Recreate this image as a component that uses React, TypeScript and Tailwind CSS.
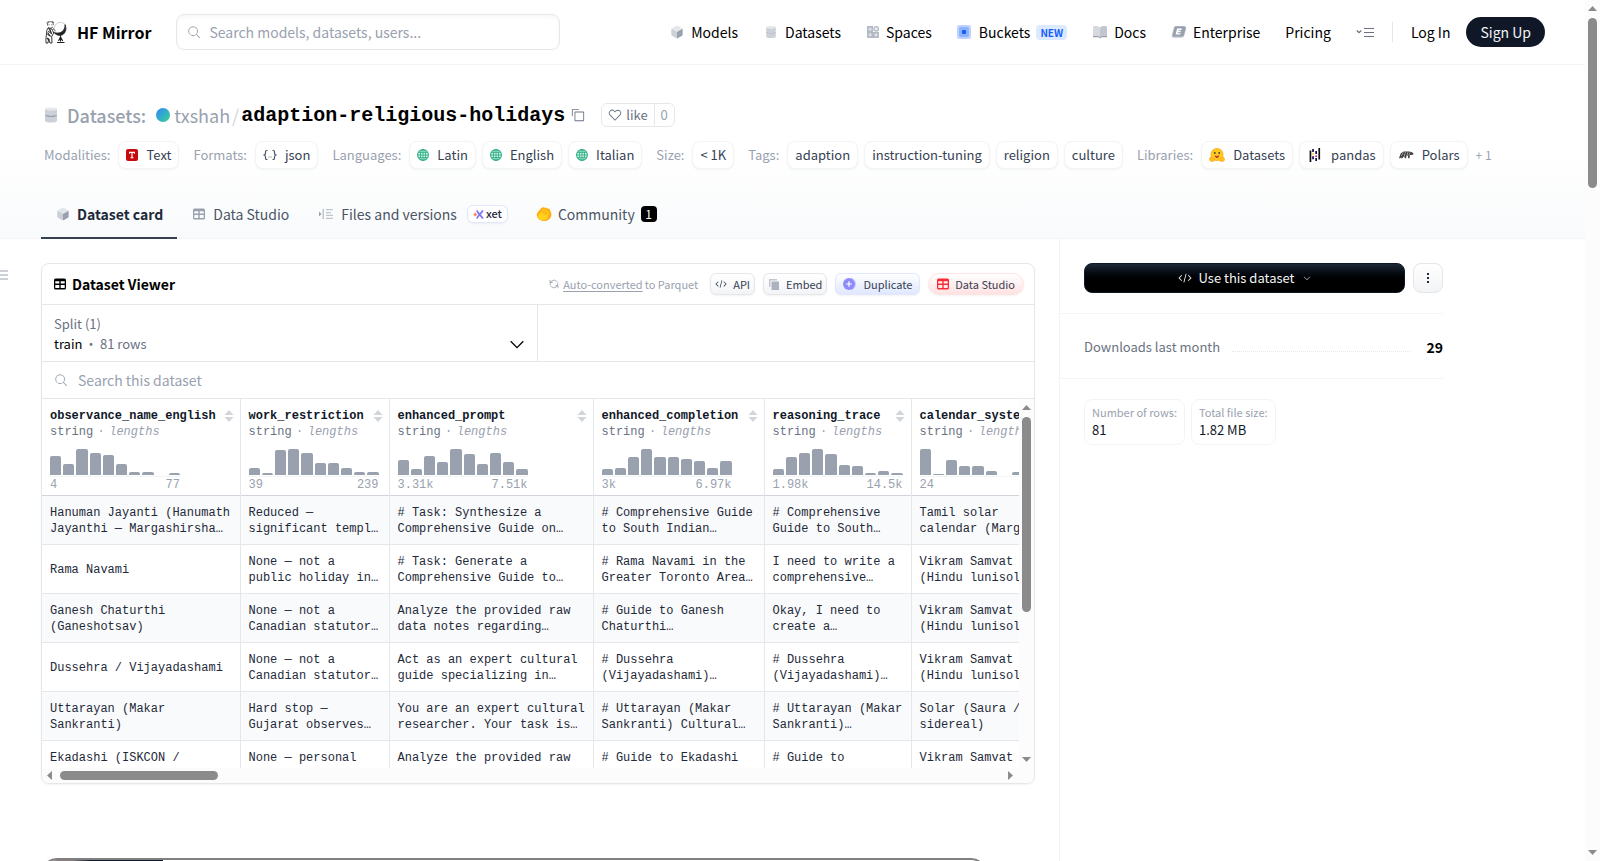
import React from 'react';
import type { ReactNode } from 'react';

interface Column {
  name: string;
  width: string;
  bars: number[];
  min: string;
  max: string;
}

const COLUMNS: Column[] = [
  { name: 'observance_name_english', width: 'w-[198px]', bars: [19, 11, 26, 22, 20, 11, 3, 3, 0, 2], min: '4', max: '77' },
  { name: 'work_restriction', width: 'w-[149px]', bars: [7, 2, 25, 26, 22, 12, 12, 7, 3, 3], min: '39', max: '239' },
  { name: 'enhanced_prompt', width: 'w-[204px]', bars: [15, 6, 19, 13, 26, 21, 11, 22, 13, 6], min: '3.31k', max: '7.51k' },
  { name: 'enhanced_completion', width: 'w-[171px]', bars: [6, 7, 18, 26, 18, 18, 16, 14, 7, 14], min: '3k', max: '6.97k' },
  { name: 'reasoning_trace', width: 'w-[147px]', bars: [6, 18, 22, 26, 21, 10, 9, 2, 4, 2], min: '1.98k', max: '14.5k' },
  { name: 'calendar_system', width: 'w-[160px]', bars: [26, 1, 15, 9, 9, 4, 0, 3, 2, 1], min: '24', max: '197' },
];

const ROWS: string[][] = [
  [
    'Hanuman Jayanti (Hanumath\nJayanthi — Margashirsha…',
    'Reduced —\nsignificant templ…',
    '# Task: Synthesize a\nComprehensive Guide on…',
    '# Comprehensive Guide\nto South Indian…',
    '# Comprehensive\nGuide to South…',
    'Tamil solar\ncalendar (Marga…',
  ],
  [
    'Rama Navami',
    'None — not a\npublic holiday in…',
    '# Task: Generate a\nComprehensive Guide to…',
    '# Rama Navami in the\nGreater Toronto Area…',
    'I need to write a\ncomprehensive…',
    'Vikram Samvat\n(Hindu lunisolar…',
  ],
  [
    'Ganesh Chaturthi\n(Ganeshotsav)',
    'None — not a\nCanadian statutor…',
    'Analyze the provided raw\ndata notes regarding…',
    '# Guide to Ganesh\nChaturthi…',
    'Okay, I need to\ncreate a…',
    'Vikram Samvat\n(Hindu lunisolar…',
  ],
  [
    'Dussehra / Vijayadashami',
    'None — not a\nCanadian statutor…',
    'Act as an expert cultural\nguide specializing in…',
    '# Dussehra\n(Vijayadashami)…',
    '# Dussehra\n(Vijayadashami)…',
    'Vikram Samvat\n(Hindu lunisolar…',
  ],
  [
    'Uttarayan (Makar\nSankranti)',
    'Hard stop —\nGujarat observes…',
    'You are an expert cultural\nresearcher. Your task is…',
    '# Uttarayan (Makar\nSankranti) Cultural…',
    '# Uttarayan (Makar\nSankranti)…',
    'Solar (Saura /\nsidereal)',
  ],
  [
    'Ekadashi (ISKCON /\nVaishnava)',
    'None — personal\nfasting day',
    'Analyze the provided raw\ndata notes regarding…',
    '# Guide to Ekadashi\nObservance…',
    '# Guide to\nEkadashi…',
    'Vikram Samvat\n(Hindu lunisolar…',
  ],
];

const SANS = "font-['Noto_Sans_CJK_SC','Noto_Sans',sans-serif]";
const MONO = "font-['Liberation_Mono',monospace]";

interface IconProps {
  className?: string;
}

function ModelIcon({ className }: IconProps) {
  return (
    <svg className={className} viewBox="0 0 24 24" fill="currentColor" aria-hidden="true">
      <path opacity=".25" d="M20.23 7.24L12 12L3.77 7.24a1.98 1.98 0 0 1 .7-.71L11 2.76c.62-.35 1.38-.35 2 0l6.53 3.77c.29.173.531.418.7.71z" />
      <path opacity=".5" d="M12 12v9.5a2.09 2.09 0 0 1-.91-.21L4.5 17.48a2.003 2.003 0 0 1-1-1.73v-7.5a2.06 2.06 0 0 1 .27-1.01L12 12z" />
      <path d="M20.5 8.25v7.5a2.003 2.003 0 0 1-1 1.73l-6.62 3.82c-.275.13-.576.198-.88.2V12l8.23-4.76c.175.308.268.656.27 1.01z" />
    </svg>
  );
}

function DatabaseIcon({ className }: IconProps) {
  return (
    <svg className={className} viewBox="0 0 25 25" fill="currentColor" aria-hidden="true">
      <ellipse cx="12.5" cy="5" rx="7.5" ry="2" opacity=".25" />
      <path opacity=".5" d="M12.5 15C16.64 15 20 14.1 20 13V20C20 21.1 16.64 22 12.5 22C8.36 22 5 21.1 5 20V13C5 14.1 8.36 15 12.5 15Z" />
      <path opacity=".5" d="M12.5 7C16.64 7 20 6.1 20 5V11.5C20 12.6 16.64 13.5 12.5 13.5C8.36 13.5 5 12.6 5 11.5V5C5 6.1 8.36 7 12.5 7Z" />
      <path d="M5.24 12C5.08 12.16 5 12.83 5 13C5 14.1 8.36 15 12.5 15C16.64 15 20 14.1 20 13C20 12.83 19.92 12.16 19.76 12C18.93 12.86 16 13.5 12.5 13.5C9 13.5 6.07 12.86 5.24 12Z" />
    </svg>
  );
}

function SpacesIcon({ className }: IconProps) {
  return (
    <svg className={className} viewBox="0 0 14 14" fill="currentColor" aria-hidden="true">
      <path d="M1.500 1H7v12H2a1 1 0 0 1-1-1V1.500A.5.500 0 0 1 1.500 1Z" opacity=".75" />
      <path d="M7 7h5.500a.5.500 0 0 1 .5.500V12a1 1 0 0 1-1 1H7Z" opacity=".75" />
      <circle cx="10.200" cy="3.800" r="2.900" opacity=".75" />
      <path d="M2.700 2.700h2.800v2.800H2.700ZM2.700 8.500h2.800v2.800H2.700ZM8.600 8.500h2.800v2.800H8.600Z" fill="#dfe3e8" />
      <circle cx="10.200" cy="3.800" r="1.500" fill="#eef0f3" />
    </svg>
  );
}

function BucketIcon({ className }: IconProps) {
  return (
    <svg className={className} viewBox="0 0 14 14" aria-hidden="true">
      <rect width="14" height="14" rx="2.500" fill="#bfd3ff" />
      <rect x="2" y="2" width="10" height="10" rx="2" fill="#8db2ff" />
      <rect x="5" y="5" width="4" height="4" rx="1" fill="#155dfc" />
    </svg>
  );
}

function DocsIcon({ className }: IconProps) {
  return (
    <svg className={className} viewBox="0 0 16 14" fill="currentColor" aria-hidden="true">
      <path opacity=".4" d="M1 2.500C1 1.700 1.600 1 2.500 1H5c1.500 0 2.700.8 3 2v9.500c-.6-.9-1.600-1.300-2.700-1.300H1Z" />
      <path opacity=".6" d="M15 2.500c0-.8-.6-1.500-1.500-1.500H11C9.500 1 8.300 1.800 8 3v9.500c.6-.9 1.600-1.300 2.700-1.300H15Z" />
      <path d="M1 11h4.300c1.200 0 2.200.5 2.700 1.500.5-1 1.500-1.500 2.700-1.500H15v1.200h-4.300c-1.100 0-2 .4-2.700 1.200-.7-.8-1.600-1.200-2.700-1.200H1Z" />
    </svg>
  );
}

function EnterpriseIcon({ className }: IconProps) {
  return (
    <svg className={className} viewBox="0 0 18 14" aria-hidden="true">
      <path fill="#c3c9d3" d="M5.300.5H14.500c2.300 0 3 1.300 2.500 3l-1.900 7c-.5 1.900-1.700 3-3.600 3H3C1 13.500.4 12.300.9 10.500l1.800-7C3.200 1.600 3.500.5 5.300.5Z" />
      <path fill="#99a1af" d="M5.500.5H14.500c1.800 0 2.300 1.100 1.900 2.600l-1.700 6.600c-.4 1.600-1.300 2.500-3 2.500H3.800c-1.800 0-2.300-1-1.900-2.500l1.800-6.700C4.100 1.500 4 .5 5.500.5Z" />
      <path fill="#fff" d="M6.900 3.200h5.200l-.4 1.500H8.400l-.3 1h3l-.4 1.500h-3l-.3 1.100h3.400l-.4 1.500H5.100Z" />
    </svg>
  );
}

function SearchIcon({ className }: IconProps) {
  return (
    <svg className={className} viewBox="0 0 32 32" fill="currentColor" aria-hidden="true">
      <path d="M30 28.590L22.450 21A11 11 0 1 0 21 22.450L28.590 30zM5 14a9 9 0 1 1 9 9a9 9 0 0 1-9-9z" />
    </svg>
  );
}

function HeartIcon({ className }: IconProps) {
  return (
    <svg className={className} viewBox="0 0 32 32" fill="currentColor" aria-hidden="true">
      <path d="M22.45,6a5.47,5.47,0,0,1,3.91,1.64,5.7,5.7,0,0,1,0,8L16,26.13,5.64,15.64a5.7,5.7,0,0,1,0-8,5.48,5.48,0,0,1,7.82,0L16,10.24l2.53-2.58A5.44,5.44,0,0,1,22.45,6m0-2a7.47,7.47,0,0,0-5.34,2.24L16,7.36,14.89,6.24a7.49,7.49,0,0,0-10.68,0,7.72,7.72,0,0,0,0,10.82L16,29,27.79,17.06a7.72,7.72,0,0,0,0-10.82A7.49,7.49,0,0,0,22.45,4Z" />
    </svg>
  );
}

function CopyIcon({ className }: IconProps) {
  return (
    <svg className={className} viewBox="0 0 32 32" fill="currentColor" aria-hidden="true">
      <path d="M28,10V28H10V10H28m0-2H10a2,2,0,0,0-2,2V28a2,2,0,0,0,2,2H28a2,2,0,0,0,2-2V10a2,2,0,0,0-2-2Z" />
      <path d="M4,18H2V4A2,2,0,0,1,4,2H18V4H4Z" />
    </svg>
  );
}

function CodeIcon({ className }: IconProps) {
  return (
    <svg className={className} viewBox="0 0 32 32" fill="currentColor" aria-hidden="true">
      <path d="M31 16l-7 7l-1.410-1.410L28.170 16l-5.580-5.590L24 9l7 7zM1 16l7-7l1.410 1.410L3.830 16l5.580 5.590L8 23l-7-7zM12.419 25.484L17.639 6l1.932.518L14.350 26z" />
    </svg>
  );
}

function ChevronIcon({ className }: IconProps) {
  return (
    <svg className={className} viewBox="0 0 32 32" fill="currentColor" aria-hidden="true">
      <path d="M16 25L2.500 11.500l1.800-1.800L16 21.400l11.700-11.700 1.800 1.800z" />
    </svg>
  );
}

function TableIcon({ className }: IconProps) {
  return (
    <svg className={className} viewBox="0 0 12 12" fill="currentColor" aria-hidden="true">
      <path fillRule="evenodd" d="M1.500.5h9A1.500 1.500 0 0 1 12 2v8a1.500 1.500 0 0 1-1.500 1.500h-9A1.500 1.500 0 0 1 0 10V2A1.500 1.500 0 0 1 1.500.5ZM1.300 3.300v2.300h4V3.300Zm5.400 0v2.300h4V3.300ZM1.300 6.900v3.200h4V6.900Zm5.400 0v3.200h4V6.900Z" />
    </svg>
  );
}

function FilesIcon({ className }: IconProps) {
  return (
    <svg className={className} viewBox="0 0 14 12" fill="currentColor" aria-hidden="true">
      <path d="M0 3.500 2.500 6 0 8.500Z" />
      <path opacity=".6" d="M3.500 1H5v10H3.500ZM7 1h7v1.300H7ZM7 4h5v1.300H7ZM7 6.800h7v1.300H7ZM7 9.700h7V11H7Z" />
    </svg>
  );
}

function GlobeIcon() {
  return (
    <svg className="mr-2 size-3" viewBox="0 0 12 12" fill="none" stroke="#2fae86" aria-hidden="true">
      <circle cx="6" cy="6" r="5.400" fill="#d8f5ea" strokeWidth="1.100" />
      <path d="M6 .6v10.800M.6 6h10.800M1.400 3.400h9.200M1.400 8.600h9.200" strokeWidth=".9" />
      <ellipse cx="6" cy="6" rx="2.600" ry="5.400" strokeWidth=".9" />
    </svg>
  );
}

function TextIcon() {
  return (
    <svg className="mr-2 size-3" viewBox="0 0 12 12" aria-hidden="true">
      <rect width="12" height="12" rx="2" fill="#c70a0c" />
      <path d="M3 2.800h6v2H8V4H6.600v4.200h.9v1h-3v-1h.9V4H4v.8H3Z" fill="#fff" />
    </svg>
  );
}

function JsonIcon() {
  return (
    <svg className="mr-2 h-3 w-3.5" viewBox="0 0 14 12" fill="none" stroke="#4a5565" strokeWidth="1.200" aria-hidden="true">
      <path d="M4.500 1.500h-.7c-.9 0-1.300.5-1.300 1.300V4c0 1-.4 1.700-1.300 2 .9.300 1.300 1 1.300 2v1.200c0 .8.400 1.300 1.300 1.300h.7M9.500 1.500h.7c.9 0 1.300.5 1.300 1.300V4c0 1 .4 1.700 1.300 2-.9.300-1.300 1-1.300 2v1.200c0 .8-.4 1.300-1.300 1.300h-.7" />
      <path d="M5.600 8h.8M7.600 8h.8" />
    </svg>
  );
}

function HuggingIcon() {
  return (
    <svg className="mr-2 h-3.5 w-4" viewBox="0 0 16 14" aria-hidden="true">
      <circle cx="8" cy="6.500" r="6" fill="#ffcb1f" stroke="#ff9d0b" strokeWidth=".8" />
      <path d="M1.500 9.200c1-.3 1.700.3 2.500 1 1.500.2 2 1.400 1.500 2.400-.5 1-3.200 1.100-4.200.4C.2 12.200.3 9.700 1.500 9.200ZM14.500 9.200c-1-.3-1.700.3-2.500 1-1.500.2-2 1.400-1.500 2.400.5 1 3.200 1.100 4.200.4 1.100-.8 1-3.300-.2-3.800Z" fill="#ffc21f" stroke="#ff9d0b" strokeWidth=".6" />
      <circle cx="5.800" cy="5" r=".9" fill="#3a3b45" />
      <circle cx="10.200" cy="5" r=".9" fill="#3a3b45" />
      <path d="M5.800 7.300c1.200 1 3.200 1 4.400 0-.1 1.700-1 2.600-2.200 2.600S5.900 9 5.800 7.300Z" fill="#c8323c" />
    </svg>
  );
}

function PandasIcon() {
  return (
    <svg className="mr-2.5 ml-0.5 h-3.5 w-3" viewBox="0 0 12 14" aria-hidden="true">
      <path fill="#130754" d="M3.200 1h1.700v3H3.200ZM3.200 8.200h1.700v3H3.200ZM6.300 2.900H8v3H6.300ZM6.300 10H8v3H6.300Z" />
      <path fill="#111" d="M.6 2.500h1.700V14H.6ZM9.400 0h1.700v11.500H9.400Z" />
      <path fill="#ffca00" d="M3.200 4.900h1.700v1.500H3.200Z" />
      <path fill="#e70488" d="M6.300 7.400H8v1.500H6.300Z" />
    </svg>
  );
}

function PolarsIcon() {
  return (
    <svg className="mr-2 h-3.5 w-4" viewBox="0 0 16 14" aria-hidden="true">
      <path fill="#3c3c3c" d="M1 10.300 2.300 6.500C3 4.800 4.400 3.600 6.400 3.500l4.100.1c1.400 0 2.500.2 3.300.6l1.600 1-.2 1.300-1.900.4-1.500.1-.3 3.300h-1.300l-.4-2.700-1.400.5-.3 2.200H6.700l-.2-2.100-.9.200-1.100 1.900H3L3.800 8.400 2.300 10.300Z" />
      <path stroke="#fff" strokeWidth=".5" d="m5.200 4-1.700 4M7.500 4 6.200 8M10 4 8.700 8M12 4.500l-1.200 3" />
    </svg>
  );
}

function ClapIcon({ className }: IconProps) {
  return (
    <svg className={className} viewBox="0 0 17 16" aria-hidden="true">
      <path fill="#ffab14" d="M.9 9.500C.6 7.800 1.500 6.900 2.400 5.700 3.600 4 5 2.300 6.600 1.200 7.600.5 8.700.6 9 1.500c1-.6 2-.4 2.300.5 1.100-.5 2-.1 2.100.8 1.200-.1 1.800.6 1.500 1.700 1 .6 1.600 2.500 1.400 4.600-.2 3.200-2.800 5.700-6.100 6.300-2.900.5-5.200-.2-7.300-2.100C1.800 12.300 1.100 11 .9 9.500Z" />
      <path fill="#ffd21e" d="M2 11.500C1.600 9.500 3 8.600 4 7.300L8 2.800c.8-.9 1.900-.3 1.500.7 1-.8 2-.2 1.500.9 1-.6 1.900.1 1.400 1.200.9-.2 1.800.3 1.300 1.400-1 1.700-1 3.100-1.200 4.800-.3 2-2.700 3.100-4.900 2.900-2.700-.1-5.100-1.300-5.600-3.200Z" />
      <path fill="none" stroke="#f08c00" strokeWidth=".7" d="M9.500 3.500 6.300 7.200M11 4.600 7.800 8.300M12.300 5.800 9.400 9.200" />
    </svg>
  );
}

function XetIcon() {
  return (
    <svg className="size-[11px]" viewBox="0 0 12 12" fill="none" aria-hidden="true">
      <path fill="#ff7d52" d="M2.500 3.800 4.400 6 2.500 8.200.4 6Z" />
      <path stroke="#7c75f5" strokeWidth="1.900" d="M4.300 1.500C4.700 4.500 9.700 7.500 10.700 10.500M10.700 1.500C9.700 4.500 4.700 7.500 4.300 10.500" />
    </svg>
  );
}

function MirrorLogo() {
  return (
    <svg className="h-6 w-[22px]" viewBox="0 0 22 24" fill="none" stroke="#222" aria-hidden="true">
      <path d="M2.500 5.500c-.5-2.500 1-4 3-3.800 2 0 3.200 1.500 2.600 3.600M1.500 3l2-1.500M7 1.200l2 1.600M3 7.200c1.500 1.300 4 1.200 5-.4M3.500 4.800h1M6.300 4.800h.8" strokeWidth=".7" />
      <path d="M2.500 8.500C1.200 11 1.800 14 1 17.500c-.3 2 .1 3.500 0 5.500h2l.7-4.500L5 23h2l-.3-6.500 2-3.500-1.700-4ZM3 11l4 3M2.300 14.500l4 2M8 8.500l2.500 2.300" strokeWidth=".9" />
      <path d="M2.600 12.500 5 16M4.500 9l2 4.500M2 18l2 2" strokeWidth="1.200" />
      <path d="M20 4.500c1.800 3.800.8 8.500-2.500 10.200-3 1.500-6.600.3-8.500-2.200 3 1 6 .6 8-.8 2.200-1.600 3.200-4.200 3-7.200Z" fill="#222" strokeWidth=".8" />
      <path d="M20 4.500c-2.500-3-7.300-2.600-9.500.4-1.400 2-1.700 4.500-.8 6.800" stroke="#999" strokeWidth=".5" />
      <path d="M15.500 15.300v6.200M12 22.500h7.500M13.500 21l2-4 2.200 4" strokeWidth="1.100" />
    </svg>
  );
}

function NavLink({ icon, children }: { icon?: ReactNode; children: ReactNode }) {
  return (
    <a href="#" className="flex items-center whitespace-nowrap text-black">
      {icon}
      {children}
    </a>
  );
}

function Tag({ icon, children }: { icon?: ReactNode; children: ReactNode }) {
  return (
    <a
      href="#"
      className="flex h-7 items-center whitespace-nowrap rounded-lg border border-gray-100 bg-white px-[7px] text-[13px] text-gray-700 shadow-xs"
    >
      {icon}
      {children}
    </a>
  );
}

function TagGroup({ label, children }: { label: string; children: ReactNode }) {
  return (
    <div className="flex items-center gap-1.5">
      <span className="mr-0.5 whitespace-nowrap text-[13px] text-gray-400">{label}</span>
      {children}
    </div>
  );
}

function SiteHeader() {
  return (
    <header className="flex h-[65px] shrink-0 items-center border-b border-gray-100 pr-10 pl-[41px] text-sm">
      <a href="#" className="mr-[25px] ml-1 flex items-center gap-2.5 text-base font-bold whitespace-nowrap text-black">
        <MirrorLogo />
        HF Mirror
      </a>
      <label className="flex h-9 w-96 items-center rounded-lg border border-gray-200 px-2.5 shadow-[inset_0_2px_4px_rgba(0,0,0,0.04)]">
        <SearchIcon className="mr-2 size-3.5 text-gray-400" />
        <input
          type="text"
          aria-label="Search"
          placeholder="Search models, datasets, users..."
          className="min-w-0 flex-1 outline-none placeholder:text-gray-400"
        />
      </label>
      <nav className="ml-auto flex items-center gap-[25px]">
        <NavLink icon={<ModelIcon className="mr-1.5 size-4 text-gray-400" />}>Models</NavLink>
        <NavLink icon={<DatabaseIcon className="mr-1.5 size-4 text-gray-400" />}>Datasets</NavLink>
        <NavLink icon={<SpacesIcon className="mr-1.5 size-3.5 text-gray-400" />}>Spaces</NavLink>
        <NavLink icon={<BucketIcon className="mr-2 size-3.5" />}>
          Buckets
          <span className="ml-1.5 rounded-sm bg-blue-100 px-1 text-[10px] leading-[15px] font-bold text-blue-600">NEW</span>
        </NavLink>
        <NavLink icon={<DocsIcon className="mr-1.5 h-3.5 w-4 text-gray-400" />}>Docs</NavLink>
        <NavLink icon={<EnterpriseIcon className="mr-1.5 h-3.5 w-4" />}>Enterprise</NavLink>
        <NavLink>Pricing</NavLink>
        <button type="button" aria-label="More" className="text-gray-500">
          <svg className="h-3 w-[18px]" viewBox="0 0 18 12" fill="none" stroke="currentColor">
            <path d="m.8 4.500 2.200 2.200 2.200-2.200" strokeWidth="1.200" />
            <path d="M8 2.500h10M8 6.500h10M8 10.500h10" />
          </svg>
        </button>
      </nav>
      <span className="mx-[18px] h-5 w-px bg-gray-200" />
      <a href="#" className="mr-4 whitespace-nowrap text-black">Log In</a>
      <a href="#" className="flex h-[30px] items-center rounded-full bg-gray-900 px-3.5 whitespace-nowrap text-gray-100">
        Sign Up
      </a>
    </header>
  );
}

function DatasetHeader() {
  return (
    <section className="shrink-0 border-b border-gray-100 bg-linear-to-t from-gray-50 to-white to-50% pt-[38px] pr-10 pl-[41px]">
      <div className="flex h-6 items-center pl-1 text-lg leading-6">
        <DatabaseIcon className="-mx-1 mr-1.5 size-5 text-gray-400" />
        <span className="mr-2.5 font-medium text-gray-400">Datasets:</span>
        <span className="mr-1 size-3.5 rounded-full bg-linear-to-br from-[#3b82f6] to-[#3fd08c]" />
        <a href="#" className="text-gray-400">txshah</a>
        <span className="mx-0.5 text-gray-300">/</span>
        <h1 className={`${MONO} pt-0.5 text-xl leading-6 font-bold whitespace-nowrap text-black`}>adaption-religious-holidays</h1>
        <button type="button" aria-label="Copy dataset name" className="mx-1.5 text-gray-500">
          <CopyIcon className="size-3.5" />
        </button>
        <div className="ml-2.5 flex h-6 items-center rounded-md border border-gray-200 bg-white text-[13px]">
          <button type="button" className="flex h-full items-center border-r border-gray-200 px-1.5 text-gray-500">
            <HeartIcon className="mr-1 size-3.5" />
            like
          </button>
          <button type="button" aria-label="See users who liked" className="px-1.5 text-gray-400">0</button>
        </div>
      </div>

      <div className="mt-3.5 flex h-7 items-center gap-3.5 pl-[3px]">
        <TagGroup label="Modalities:">
          <Tag icon={<TextIcon />}>Text</Tag>
        </TagGroup>
        <TagGroup label="Formats:">
          <Tag icon={<JsonIcon />}>json</Tag>
        </TagGroup>
        <TagGroup label="Languages:">
          <Tag icon={<GlobeIcon />}>Latin</Tag>
          <Tag icon={<GlobeIcon />}>English</Tag>
          <Tag icon={<GlobeIcon />}>Italian</Tag>
        </TagGroup>
        <TagGroup label="Size:">
          <Tag>&lt; 1K</Tag>
        </TagGroup>
        <TagGroup label="Tags:">
          <Tag>adaption</Tag>
          <Tag>instruction-tuning</Tag>
          <Tag>religion</Tag>
          <Tag>culture</Tag>
        </TagGroup>
        <TagGroup label="Libraries:">
          <Tag icon={<HuggingIcon />}>Datasets</Tag>
          <Tag icon={<PandasIcon />}>pandas</Tag>
          <Tag icon={<PolarsIcon />}>Polars</Tag>
          <button type="button" className="ml-0.5 text-xs whitespace-nowrap text-gray-400">+ 1</button>
        </TagGroup>
      </div>

      <nav className="-mb-px mt-[22px] flex h-12 text-sm text-gray-600">
        <a href="#" className="flex items-center border-b-2 border-gray-700 px-3.5 font-semibold whitespace-nowrap text-gray-800">
          <ModelIcon className="mr-1.5 size-4 text-gray-400" />
          Dataset card
        </a>
        <a href="#" className="flex items-center border-b-2 border-transparent px-4 whitespace-nowrap">
          <TableIcon className="mr-2 size-3 text-gray-400" />
          Data Studio
        </a>
        <a href="#" className="flex items-center border-b-2 border-transparent px-3.5 whitespace-nowrap">
          <FilesIcon className="mr-2 h-3 w-3.5 text-gray-400" />
          Files and versions
          <span className="ml-2.5 flex h-[18px] items-center gap-0.5 rounded-md border border-indigo-100 bg-white px-[5px] text-[11px] font-medium text-gray-800 shadow-xs">
            <XetIcon />
            xet
          </span>
        </a>
        <a href="#" className="flex items-center border-b-2 border-transparent px-3.5 whitespace-nowrap">
          <ClapIcon className="mr-1.5 size-4" />
          Community
          <span className="ml-1.5 flex size-4 items-center justify-center rounded-sm bg-black text-xs text-white">1</span>
        </a>
      </nav>
    </section>
  );
}

function ViewerToolbar() {
  return (
    <div className="flex h-[41px] items-center border-b border-gray-200 pr-2.5 pl-3 text-[11px]">
      <TableIcon className="mr-1.5 size-3 text-black" />
      <h2 className="text-sm font-semibold whitespace-nowrap text-black">Dataset Viewer</h2>
      <div className="ml-auto flex items-center gap-2 whitespace-nowrap text-gray-700">
        <span className="mr-1 flex items-center text-gray-400">
          <svg className="mr-1 size-2.5" viewBox="0 0 12 12" fill="none" stroke="currentColor" aria-hidden="true">
            <path d="M1.500 7.500A4.700 4.700 0 0 1 9 2.500L10.500 4M10.500 4.800A4.700 4.700 0 0 1 3 9.500L1.500 8" />
            <path d="M4.500 4.200H1.200V1M7.500 8h3.300v3" />
          </svg>
          <a href="#" className="underline underline-offset-2">Auto-converted</a>
          <span className="ml-0.5">to Parquet</span>
        </span>
        <button type="button" className="flex h-[22px] items-center rounded-md border border-gray-200 bg-linear-to-b from-white to-gray-100 px-1 shadow-xs">
          <CodeIcon className="mr-1.5 size-3" />
          API
        </button>
        <button type="button" className="flex h-[22px] items-center rounded-md border border-gray-200 bg-linear-to-b from-white to-gray-100 px-1 shadow-xs">
          <svg className="mr-1.5 size-3 text-gray-400" viewBox="0 0 12 12" fill="currentColor" aria-hidden="true">
            <path opacity=".6" d="M1 1h8v1.500H2.500V9H1Z" />
            <path opacity=".8" d="M3.500 3.500H11V12H3.500Z" />
          </svg>
          Embed
        </button>
        <button type="button" className="flex h-[22px] items-center rounded-md border border-indigo-100 bg-linear-to-b from-white to-indigo-100 px-[7px] shadow-xs">
          <svg className="mr-1.5 size-3.5" viewBox="0 0 14 14" aria-hidden="true">
            <path d="M8 1.200a6 6 0 0 1 0 11.600" fill="none" stroke="#a5a2ff" strokeDasharray="1.500 1" />
            <circle cx="6" cy="7" r="6" fill="#8e8cf8" />
            <path d="M6 4.200v5.600M3.200 7h5.600" stroke="#fff" strokeWidth="1.200" />
          </svg>
          Duplicate
        </button>
        <button type="button" className="flex h-[22px] items-center rounded-full border border-red-100 bg-linear-to-b from-white to-red-100 px-2 shadow-xs">
          <TableIcon className="mr-1.5 size-3 text-[#fb2c36]" />
          Data Studio
        </button>
      </div>
    </div>
  );
}

function SortIcon() {
  return (
    <svg className="h-3 w-2.5 shrink-0 text-gray-300" viewBox="0 0 10 12" fill="currentColor" aria-hidden="true">
      <path d="M5 0l4.500 5h-9ZM5 12L.5 7h9Z" />
    </svg>
  );
}

function Histogram({ bars, min, max }: { bars: number[]; min: string; max: string }) {
  return (
    <div className="mt-[9px] w-[130px] font-normal text-gray-400">
      <div className="flex h-[26px] items-end gap-0.5">
        {bars.map((bar, index) => (
          <span key={index} className="flex-1 rounded-t-xs bg-gray-400" style={{ height: bar }} />
        ))}
      </div>
      <div className="mt-px flex h-4 justify-between border-t border-gray-100 leading-4">
        <span>{min}</span>
        <span>{max}</span>
      </div>
    </div>
  );
}

function DataTable() {
  return (
    <table className={`${MONO} w-[1029px] table-fixed border-collapse text-left text-xs leading-4`}>
      <thead>
        <tr className="h-24 border-b border-gray-300">
          {COLUMNS.map((column) => (
            <th key={column.name} scope="col" className={`${column.width} border-r border-gray-200 pt-[9px] pr-1.5 pl-2 align-top`}>
              <div className="flex items-center justify-between text-gray-900">
                {column.name}
                <SortIcon />
              </div>
              <div className="flex whitespace-nowrap font-normal text-gray-500">
                string
                <span className="w-4 text-center text-gray-400">·</span>
                <span className="text-gray-400 italic">lengths</span>
              </div>
              <Histogram bars={column.bars} min={column.min} max={column.max} />
            </th>
          ))}
        </tr>
      </thead>
      <tbody>
        {ROWS.map((row, rowIndex) => (
          <tr key={rowIndex} className="h-[49px] border-b border-gray-200 odd:bg-gray-50">
            {row.map((cell, index) => (
              <td key={index} className="border-r border-gray-200 px-2 pt-0.5 whitespace-pre text-gray-800">
                {cell}
              </td>
            ))}
          </tr>
        ))}
      </tbody>
    </table>
  );
}

function VerticalBar({ thumb }: { thumb: string }) {
  return (
    <div className="flex w-[15px] shrink-0 flex-col items-center bg-[#fcfcfc] py-1.5 text-[#8b8b8b]" aria-hidden="true">
      <svg className="h-[5px] w-[9px] shrink-0" viewBox="0 0 9 5" fill="currentColor"><path d="M4.500 0 9 5H0Z" /></svg>
      <div className={`mt-[7px] w-[9px] rounded-full bg-[#8b8b8b] ${thumb}`} />
      <svg className="mt-auto h-[5px] w-[9px] shrink-0" viewBox="0 0 9 5" fill="currentColor"><path d="M0 0h9L4.500 5Z" /></svg>
    </div>
  );
}

function HorizontalBar() {
  return (
    <div className="flex h-[15px] items-center bg-[#fcfcfc] pr-[21px] pl-[5px] text-[#8b8b8b]" aria-hidden="true">
      <svg className="h-[9px] w-[5px]" viewBox="0 0 5 9" fill="currentColor"><path d="M5 0v9L0 4.500Z" /></svg>
      <div className="ml-2 h-[9px] w-[158px] rounded-full bg-[#8b8b8b]" />
      <svg className="ml-auto h-[9px] w-[5px]" viewBox="0 0 5 9" fill="currentColor"><path d="M0 0v9l5-4.500Z" /></svg>
    </div>
  );
}

function DatasetViewer() {
  return (
    <div className="overflow-hidden rounded-lg border border-gray-200 shadow-xs">
      <ViewerToolbar />
      <div className="grid grid-cols-2 border-b border-gray-200 text-[13px] leading-5">
        <div className="flex h-14 items-end border-r border-gray-200 px-3 pb-[7px]">
          <div className="flex-1">
            <label htmlFor="split" className="block text-gray-500">Split (1)</label>
            <div className="flex text-gray-500">
              <select id="split" className="w-7 appearance-none text-black outline-none">
                <option>train</option>
              </select>
              <span className="w-[18px] text-center">·</span>
              <span>81 rows</span>
            </div>
          </div>
          <ChevronIcon className="mb-0.5 size-4 text-black" />
        </div>
      </div>
      <label className="flex h-[37px] items-center border-b border-gray-200 px-3 text-sm">
        <SearchIcon className="mr-2.5 size-3.5 text-gray-400" />
        <input
          type="text"
          aria-label="Search this dataset"
          placeholder="Search this dataset"
          className="min-w-0 flex-1 outline-none placeholder:text-gray-400"
        />
      </label>
      <div className="flex h-[369px]">
        <div className="min-w-0 flex-1 overflow-hidden">
          <DataTable />
        </div>
        <VerticalBar thumb="h-[195px]" />
      </div>
      <HorizontalBar />
    </div>
  );
}

function Stat({ label, value }: { label: string; value: string }) {
  return (
    <div className="rounded-lg border border-gray-100 px-[7px] py-1">
      <div className="text-[11px] leading-4 text-gray-400">{label}</div>
      <div className="text-[13px] leading-5 text-gray-900">{value}</div>
    </div>
  );
}

function Sidebar() {
  return (
    <aside className="border-l border-gray-100 pt-6">
      <div className="flex gap-2 pb-5 pl-6">
        <button
          type="button"
          className="flex h-[30px] flex-1 items-center justify-center rounded-lg border border-gray-900 bg-linear-to-b from-gray-800 to-black to-70% text-[13px] text-gray-100"
        >
          <CodeIcon className="mr-1.5 size-3.5" />
          Use this dataset
          <ChevronIcon className="ml-2 size-2 text-gray-400" />
        </button>
        <button
          type="button"
          aria-label="More actions"
          className="flex size-[30px] items-center justify-center rounded-lg border border-gray-200 bg-linear-to-b from-white to-gray-100"
        >
          <svg className="h-2.5 w-0.5" viewBox="0 0 2 10" fill="#1e2939"><path d="M0 0h2v2H0zM0 4h2v2H0zM0 8h2v2H0z" /></svg>
        </button>
      </div>
      <dl className="flex h-[66px] items-center border-y border-gray-100 pt-0.5 pl-6">
        <dt className="text-[13px] text-gray-500">Downloads last month</dt>
        <dd className="flex flex-1 items-center text-sm font-bold text-black">
          <span className="mr-4 ml-3 mt-2 flex-1 border-b border-dotted border-gray-200" />
          29
        </dd>
      </dl>
      <div className="flex gap-1.5 pt-5 pl-6">
        <Stat label="Number of rows:" value="81" />
        <Stat label="Total file size:" value="1.82 MB" />
      </div>
    </aside>
  );
}

export default function App() {
  return (
    <div className={`${SANS} flex h-screen overflow-hidden bg-white leading-6`}>
      <div className="relative flex min-w-0 flex-1 flex-col overflow-hidden">
        <SiteHeader />
        <DatasetHeader />
        <main className="grid max-w-[1443px] flex-1 grid-cols-[minmax(0,1fr)_384px] pl-[41px]">
          <div className="min-w-0 pt-6 pr-6">
            <DatasetViewer />
            <div className="mt-[74px] mr-12 h-40 overflow-hidden rounded-2xl border-2 border-[#808080] bg-white">
              <div className="h-full w-[120px] bg-linear-to-r from-[#8a7f80] from-25% to-[#111c2b] to-40%" />
            </div>
          </div>
          <Sidebar />
        </main>
        <button type="button" aria-label="Table of contents" className="absolute top-[270px] left-0 text-gray-400">
          <svg className="h-2.5 w-2" viewBox="0 0 8 10" stroke="currentColor" strokeWidth="1.200"><path d="M0 1h8M0 5h8M0 9h8" /></svg>
        </button>
      </div>
      <VerticalBar thumb="h-[170px]" />
    </div>
  );
}
